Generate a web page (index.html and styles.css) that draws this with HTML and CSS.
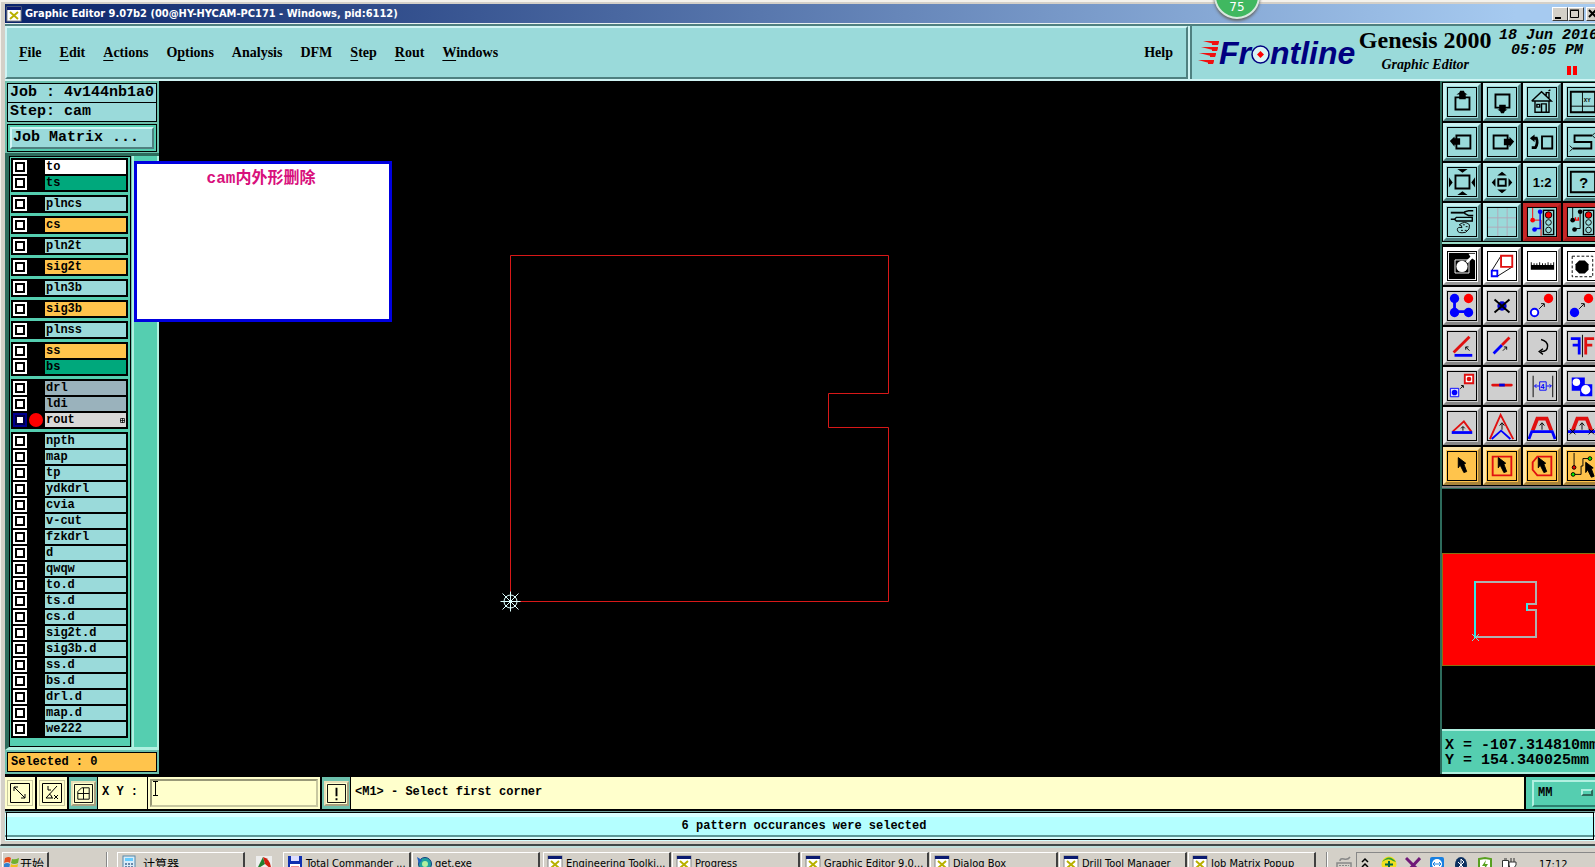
FILE: index.html
```html
<!DOCTYPE html>
<html lang="en">
<head>
    <meta charset="UTF-8">
    <meta name="viewport" content="width=device-width, initial-scale=1.0">
    <title>Graphic Editor 9.07b2</title>
    <link rel="stylesheet" href="styles.css">
</head>
<body>
    <svg class="defs" width="0" height="0" aria-hidden="true">
        <defs>
            <symbol id="xicon" viewBox="0 0 16 16">
                <rect x="1" y="1" width="14" height="14" fill="#fff" stroke="#888"/>
                <rect x="1" y="1" width="14" height="3" fill="#0a1a70"/>
                <path d="M4 6l8 7M12 6l-8 7" stroke="#b8b000" stroke-width="2"/>
            </symbol>
            <symbol id="cursor" viewBox="0 0 30 30">
                <path d="M11 6l8 6-2 1 3 8-3 1-4-8-2 3z" fill="#000" stroke="#000" stroke-linejoin="round"/>
            </symbol>
            <symbol id="uparrow" viewBox="0 0 30 30">
                <path d="M15 19v-7M12.500 14.500l2.500-3 2.500 3" fill="none" stroke="#000"/>
            </symbol>
            <symbol id="nearrow" viewBox="0 0 30 30">
                <path d="M12 18l5-5M14 12.500h3.500v3.500" fill="none" stroke="#000"/>
            </symbol>
            <symbol id="light" viewBox="0 0 30 30">
                <rect x="16.500" y="2.500" width="11" height="26" fill="#9adada" stroke="#000" stroke-width="1.500"/>
                <circle cx="22" cy="7.500" r="3.500" fill="#f00" stroke="#000"/>
                <circle cx="22" cy="15.500" r="3" fill="none" stroke="#000"/>
                <circle cx="22" cy="23.500" r="3" fill="none" stroke="#000"/>
            </symbol>
        </defs>
    </svg>

    <div class="window">
        <div class="titlebar">
            <svg class="title-icon"><use href="#xicon"/></svg>
            <span class="title-text">Graphic Editor 9.07b2 (00@HY-HYCAM-PC171 - Windows, pid:6112)</span>
            <div class="title-buttons">
                <button type="button" aria-label="Minimize"><svg viewBox="0 0 12 12"><path d="M2 10h6" stroke="#000" stroke-width="2"/></svg></button>
                <button type="button" aria-label="Maximize"><svg viewBox="0 0 12 12"><path d="M1.500 2.500h8v7h-8zM1 2h9" fill="none" stroke="#000"/></svg></button>
                <button type="button" class="close" aria-label="Close"><svg viewBox="0 0 12 12"><path d="M2 2l7 7M9 2l-7 7" stroke="#000" stroke-width="2"/></svg></button>
            </div>
        </div>

        <header class="header">
            <nav class="menu">
                <a href="#"><u>F</u>ile</a>
                <a href="#"><u>E</u>dit</a>
                <a href="#"><u>A</u>ctions</a>
                <a href="#">O<u>p</u>tions</a>
                <a href="#">Analysis</a>
                <a href="#">DFM</a>
                <a href="#"><u>S</u>tep</a>
                <a href="#"><u>R</u>out</a>
                <a href="#"><u>W</u>indows</a>
                <a href="#" class="help">Help</a>
            </nav>
            <div class="brand">
                <div class="logo">
                    <svg class="speed" viewBox="0 0 21 24"><path d="M5 0h16l-1 4zM3 6h17l-1 4zM1 12h17l-1 4zM0 19h16l-1 4z" fill="#f01010"/><path d="M14 0h7l-1 4h-6zM14 6h6l-1 4h-5zM12 12h6l-1 4h-5zM10 19h6l-1 4h-5z" fill="#f01010"/></svg>
                    <span>Fr</span><svg class="logo-o" viewBox="0 0 19 19"><circle cx="9.500" cy="9.500" r="8.500" fill="#d8f4f4" stroke="#000080" stroke-width="1.500"/><path d="M9.500 6l3.500 3.500-3.500 3.500L6 9.500z" fill="#f00"/></svg><span>ntline</span>
                </div>
                <div class="product">
                    <div class="product-name">Genesis 2000</div>
                    <div class="product-sub">Graphic Editor</div>
                </div>
                <div class="clock">
                    <div>18 Jun 2016</div>
                    <div class="time">05:05 PM</div>
                    <div class="pause"><i></i><i></i></div>
                </div>
            </div>
        </header>

        <main class="main">
            <aside class="left">
                <div class="jobinfo">
                    <div class="field">Job : 4v144nb1a0</div>
                    <div class="field">Step: cam</div>
                </div>
                <div class="matrix"><button type="button">Job Matrix ...</button></div>
                <div class="layers-area">
                    <div class="layers">
                        <div class="group">
                            <div class="layer white"><input type="checkbox" id="l-to"><label for="l-to">to</label></div>
                            <div class="layer green"><input type="checkbox" id="l-ts"><label for="l-ts">ts</label></div>
                        </div>
                        <div class="group"><div class="layer"><input type="checkbox" id="l-plncs"><label for="l-plncs">plncs</label></div></div>
                        <div class="group"><div class="layer orange"><input type="checkbox" id="l-cs"><label for="l-cs">cs</label></div></div>
                        <div class="group"><div class="layer"><input type="checkbox" id="l-pln2t"><label for="l-pln2t">pln2t</label></div></div>
                        <div class="group"><div class="layer orange"><input type="checkbox" id="l-sig2t"><label for="l-sig2t">sig2t</label></div></div>
                        <div class="group"><div class="layer"><input type="checkbox" id="l-pln3b"><label for="l-pln3b">pln3b</label></div></div>
                        <div class="group"><div class="layer orange"><input type="checkbox" id="l-sig3b"><label for="l-sig3b">sig3b</label></div></div>
                        <div class="group"><div class="layer"><input type="checkbox" id="l-plnss"><label for="l-plnss">plnss</label></div></div>
                        <div class="group">
                            <div class="layer orange"><input type="checkbox" id="l-ss"><label for="l-ss">ss</label></div>
                            <div class="layer green"><input type="checkbox" id="l-bs"><label for="l-bs">bs</label></div>
                        </div>
                        <div class="group">
                            <div class="layer gray"><input type="checkbox" id="l-drl"><label for="l-drl">drl</label></div>
                            <div class="layer gray"><input type="checkbox" id="l-ldi"><label for="l-ldi">ldi</label></div>
                            <div class="layer active"><input type="checkbox" id="l-rout" checked><i class="dot"></i><label for="l-rout">rout<svg class="plus" viewBox="0 0 5 5"><path d="M0.500 0.500h4v4h-4zM2.500 0v5M0 2.500h5" fill="none" stroke="#000" stroke-width="0.700"/></svg></label></div>
                        </div>
                        <div class="group">
                            <div class="layer"><input type="checkbox" id="l-npth"><label for="l-npth">npth</label></div>
                            <div class="layer"><input type="checkbox" id="l-map"><label for="l-map">map</label></div>
                            <div class="layer"><input type="checkbox" id="l-tp"><label for="l-tp">tp</label></div>
                            <div class="layer"><input type="checkbox" id="l-ydkdrl"><label for="l-ydkdrl">ydkdrl</label></div>
                            <div class="layer"><input type="checkbox" id="l-cvia"><label for="l-cvia">cvia</label></div>
                            <div class="layer"><input type="checkbox" id="l-vcut"><label for="l-vcut">v-cut</label></div>
                            <div class="layer"><input type="checkbox" id="l-fzkdrl"><label for="l-fzkdrl">fzkdrl</label></div>
                            <div class="layer"><input type="checkbox" id="l-d"><label for="l-d">d</label></div>
                            <div class="layer"><input type="checkbox" id="l-qwqw"><label for="l-qwqw">qwqw</label></div>
                            <div class="layer"><input type="checkbox" id="l-tod"><label for="l-tod">to.d</label></div>
                            <div class="layer"><input type="checkbox" id="l-tsd"><label for="l-tsd">ts.d</label></div>
                            <div class="layer"><input type="checkbox" id="l-csd"><label for="l-csd">cs.d</label></div>
                            <div class="layer"><input type="checkbox" id="l-sig2td"><label for="l-sig2td">sig2t.d</label></div>
                            <div class="layer"><input type="checkbox" id="l-sig3bd"><label for="l-sig3bd">sig3b.d</label></div>
                            <div class="layer"><input type="checkbox" id="l-ssd"><label for="l-ssd">ss.d</label></div>
                            <div class="layer"><input type="checkbox" id="l-bsd"><label for="l-bsd">bs.d</label></div>
                            <div class="layer"><input type="checkbox" id="l-drld"><label for="l-drld">drl.d</label></div>
                            <div class="layer"><input type="checkbox" id="l-mapd"><label for="l-mapd">map.d</label></div>
                            <div class="layer"><input type="checkbox" id="l-we222"><label for="l-we222">we222</label></div>
                        </div>
                    </div>
                    <div class="layer-scroll"></div>
                </div>
                <div class="selected">Selected : 0</div>
            </aside>

            <section class="canvas">
                <svg class="drawing" width="100%" height="100%">
                    <path d="M351.500 174.500h378v138h-60v34h60v174h-378z" fill="none" stroke="#d81818"/>
                    <g stroke="#dff" fill="none">
                        <circle cx="351.500" cy="520.500" r="6.500"/>
                        <path d="M341.500 520.500h20M351.500 510.500v20M343.500 512.500l16 16M359.500 512.500l-16 16"/>
                    </g>
                </svg>
            </section>

            <aside class="right">
                <div class="tools view-tools">
                    <button type="button" aria-label="Pan up"><svg viewBox="0 0 30 30"><path d="M8 10h15v13H8z" fill="none" stroke="#000" stroke-width="2"/><path d="M9 7l3-2 1-2h4l1 2 3 2h-2v5h-7V7z"/></svg></button>
                    <button type="button" aria-label="Pan down"><svg viewBox="0 0 30 30"><path d="M8 7h15v14H8z" fill="none" stroke="#000" stroke-width="2"/><path d="M12 18h7v5h2l-3 2-1 2h-3l-1-2-3-2h2z"/></svg></button>
                    <button type="button" aria-label="Home"><svg viewBox="0 0 30 30"><path d="M4 14L14.500 4 25 14H4M7.500 14v12h15V14M14.500 26v-9h5v9M9.500 17.500h3v3h-3zM19.500 8V5h3v6M22 3l2-1" fill="none" stroke="#000" stroke-width="1.500"/></svg></button>
                    <button type="button" aria-label="Zoom XY"><svg viewBox="0 0 30 30"><path d="M3 4h26v22H3z" fill="none" stroke="#000" stroke-width="2"/><path d="M15.500 4v22M3 19.500h26" stroke="#000"/><text x="17" y="15" font-size="6">XY</text></svg></button>

                    <button type="button" aria-label="Pan left"><svg viewBox="0 0 30 30"><path d="M9 8h15v14H9z" fill="none" stroke="#000" stroke-width="2"/><path d="M2 14l5-5v2h6v7H7v2z"/></svg></button>
                    <button type="button" aria-label="Pan right"><svg viewBox="0 0 30 30"><path d="M6 8h15v14H6z" fill="none" stroke="#000" stroke-width="2"/><path d="M28 14.500l-5-5v2h-6v7h6v2z"/></svg></button>
                    <button type="button" aria-label="Previous view"><svg viewBox="0 0 30 30"><path d="M15 9h11v13H15z" fill="none" stroke="#000" stroke-width="2"/><path d="M4 11h5q2 5-1 10H4" fill="none" stroke="#000" stroke-width="3"/><path d="M2 11l5-4v8z"/></svg></button>
                    <button type="button" aria-label="Serpentine view"><svg viewBox="0 0 30 30"><path d="M26 8H7v7h18v7H5" fill="none" stroke="#000" stroke-width="2"/><path d="M29 5l-3 3 3 3M2 19l3 3-3 3" fill="none" stroke="#000"/></svg></button>

                    <button type="button" aria-label="Zoom in"><svg viewBox="0 0 30 30"><path d="M8 8h15v14H8z" fill="none" stroke="#000" stroke-width="2"/><path d="M10 1h11l-5.500 4zM10 29h11l-5.500-4zM1 10v11l4-5.500zM29 10v11l-4-5.500z"/></svg></button>
                    <button type="button" aria-label="Zoom out"><svg viewBox="0 0 30 30"><path d="M11 12h8v7h-8z" fill="none" stroke="#000" stroke-width="2"/><path d="M10 8h10l-5-4zM10 23h10l-5 4zM8 11v9l-4-4.500zM22 11v9l4-4.500z"/></svg></button>
                    <button type="button" aria-label="Zoom 1:2"><svg viewBox="0 0 30 30"><text x="5" y="20" font-size="14" class="tall">1:2</text></svg></button>
                    <button type="button" aria-label="Query"><svg viewBox="0 0 30 30"><path d="M3 4h26v22H3z" fill="none" stroke="#000" stroke-width="2"/><text x="12" y="21" font-size="16">?</text></svg></button>

                    <button type="button" aria-label="Settings"><svg viewBox="0 0 30 30"><path d="M3 4h15v2H3z"/><path d="M27 3h-5l-4 1v2l4 2h5M3 12h4l2-2h17v4H9l-2-2" fill="none" stroke="#000" stroke-width="1.500"/><path d="M12 18q6-5 11 0 1 5-4 8-9 2-9-3 0-3 5-2 0-3-3-3z" fill="none" stroke="#000"/><path d="M16 18h2M19 20h2M14 24h2M18 24h2" stroke="#000"/></svg></button>
                    <button type="button" aria-label="Grid"><svg viewBox="0 0 30 30"><path d="M10.500 0v30M20.500 0v30M0 10.500h30M0 20.500h30" stroke="#b0a8b8"/></svg></button>
                    <button type="button" class="redframe" aria-label="Net on"><svg viewBox="0 0 30 30"><path d="M5 0v13h9v17" fill="none" stroke="#f00"/><path d="M13 4v18H7" fill="none" stroke="#00f" stroke-width="1.500"/><circle cx="5" cy="13" r="2.500" fill="#f00"/><circle cx="13" cy="4" r="2.500" fill="#00f"/><circle cx="7" cy="23" r="2.500" fill="#00f"/><use href="#light"/></svg></button>
                    <button type="button" class="redframe" aria-label="Net off"><svg viewBox="0 0 30 30"><path d="M5 0v13M13 4v18H7" fill="none" stroke="#000"/><path d="M5 13h7M8 13v-3M11 13v-3" stroke="#f00" stroke-width="1.500"/><circle cx="5" cy="13" r="2.500"/><circle cx="13" cy="4" r="2.500"/><circle cx="7" cy="23" r="2.500"/><use href="#light"/></svg></button>
                </div>

                <div class="tools edit-tools">
                    <button type="button" class="lit" aria-label="Negative"><svg viewBox="0 0 30 30"><path d="M1 1h28v28H1z"/><path d="M7.500 8.500h15v14h-15z" fill="none" stroke="#fff"/><circle cx="15" cy="15.500" r="6" fill="#fff"/><path d="M19 10l5-5-2-3h7v7l-3-2-5 5z" fill="#fff"/></svg></button>
                    <button type="button" class="lit" aria-label="Scale"><svg viewBox="0 0 30 30"><path d="M4 20L14 4M10 26l16-10" stroke="#000"/><path d="M14 4h12v12H14z" fill="#fff" stroke="#e01010" stroke-width="2"/><path d="M4 20h6v6H4z" fill="#fff" stroke="#00f" stroke-width="2"/></svg></button>
                    <button type="button" class="lit" aria-label="Measure"><svg viewBox="0 0 30 30"><path d="M3 14h25v5H3zM3 11h1v4H3zM6 12h1v3H6zM9 12h1v3H9zM12 11h1v4h-1zM15 12h1v3h-1zM18 12h1v3h-1zM21 11h1v4h-1zM24 12h1v3h-1zM27 11h1v4h-1z"/></svg></button>
                    <button type="button" class="lit" aria-label="Highlight"><svg viewBox="0 0 30 30"><path d="M4.500 4.500h22v22h-22z" fill="none" stroke="#000" stroke-dasharray="3 2"/><path d="M12 9h6l4 4v6l-4 4h-6l-4-4v-6z"/></svg></button>

                    <button type="button" aria-label="Add nodes"><svg viewBox="0 0 30 30"><path d="M7 7v14h15" fill="none" stroke="#00f" stroke-width="3"/><circle cx="7" cy="7" r="5" fill="#00f"/><circle cx="7" cy="22" r="5" fill="#00f"/><circle cx="22" cy="22" r="5" fill="#00f"/><circle cx="22" cy="7" r="5" fill="#f00"/></svg></button>
                    <button type="button" aria-label="Delete"><svg viewBox="0 0 30 30"><circle cx="15" cy="15" r="5" fill="#0000d0"/><path d="M7 8l16 14M23 8L7 22" stroke="#000" stroke-width="2"/></svg></button>
                    <button type="button" aria-label="Move"><svg viewBox="0 0 30 30"><circle cx="7" cy="22" r="4" fill="#fff" stroke="#00f" stroke-width="2"/><circle cx="22" cy="7" r="5" fill="#f00"/><use href="#nearrow"/></svg></button>
                    <button type="button" aria-label="Copy"><svg viewBox="0 0 30 30"><circle cx="7" cy="22" r="5" fill="#00f"/><circle cx="22" cy="7" r="5" fill="#f00"/><use href="#nearrow"/></svg></button>

                    <button type="button" aria-label="Angle"><svg viewBox="0 0 30 30"><path d="M6 22L23 5" stroke="#e01010" stroke-width="3"/><path d="M7 25h19" stroke="#00f" stroke-width="3"/><path d="M23 20l-4-4M19 19v-3h3" fill="none" stroke="#000"/></svg></button>
                    <button type="button" aria-label="Extend"><svg viewBox="0 0 30 30"><path d="M6 23l9-9" stroke="#00f" stroke-width="3"/><path d="M15 14l8-8" stroke="#e01010" stroke-width="3"/><path d="M16 20l4-4M17 16h3v3" fill="none" stroke="#000"/></svg></button>
                    <button type="button" aria-label="Rotate"><svg viewBox="0 0 30 30"><path d="M14 8q7 2 7 7 0 6-7 6M16 18l-4 3 4 3" fill="none" stroke="#000" stroke-width="1.500"/></svg></button>
                    <button type="button" aria-label="Mirror"><svg viewBox="0 0 30 30"><path d="M3 7h9v17M5 14h7" fill="none" stroke="#00f" stroke-width="3"/><path d="M15.500 3v24" stroke="#000"/><path d="M28 7h-9v17M19 14h7" fill="none" stroke="#e01010" stroke-width="3"/></svg></button>

                    <button type="button" aria-label="Copy to layer"><svg viewBox="0 0 30 30"><path d="M18 3h9v9h-9z" fill="#fff" stroke="#e01010" stroke-width="2"/><circle cx="22.500" cy="7.500" r="2.500" fill="#e01010"/><path d="M2.500 17.500h9v9h-9z" fill="#ddf" stroke="#00f"/><circle cx="7" cy="22" r="3" fill="#00f"/><path d="M13 18l3-3M14 14.500h2.500v2.500" fill="none" stroke="#000"/></svg></button>
                    <button type="button" aria-label="Join"><svg viewBox="0 0 30 30"><path d="M5 14h20" stroke="#e01010" stroke-width="3" stroke-linecap="round"/><path d="M12 14h6" stroke="#00d" stroke-width="3"/></svg></button>
                    <button type="button" aria-label="Spacing"><svg viewBox="0 0 30 30"><path d="M5.500 4v23M26.500 4v23" stroke="#000"/><path d="M12.500 10.500h7v9h-7zM12 15H7m2-2l-2 2 2 2M20 15h5m-2-2l2 2-2 2" fill="none" stroke="#00f"/><text x="13" y="18" font-size="8" fill="#00f">4</text></svg></button>
                    <button type="button" aria-label="Merge"><svg viewBox="0 0 30 30"><path d="M4 6h14v7h8v13H13v-6H4z" fill="#00f"/><circle cx="9" cy="11" r="4" fill="#fff"/><circle cx="19" cy="19" r="5" fill="#fff"/></svg></button>

                    <button type="button" aria-label="Chamfer"><svg viewBox="0 0 30 30"><path d="M5 21L17 10l8 11" fill="none" stroke="#e01010" stroke-width="2"/><path d="M4 22h22" stroke="#00f" stroke-width="3"/><path d="M16 20v-4M14 17.500l2-2 2 2" fill="none" stroke="#000"/></svg></button>
                    <button type="button" aria-label="Stretch peak"><svg viewBox="0 0 30 30"><path d="M2 29L13.500 3 27 29" fill="none" stroke="#e01010" stroke-width="2"/><path d="M4 29l10-9 10 9" fill="none" stroke="#00f" stroke-width="2"/><use href="#uparrow"/></svg></button>
                    <button type="button" aria-label="Stretch plateau"><svg viewBox="0 0 30 30"><path d="M5 20L10 7h10l5 13" fill="none" stroke="#e01010" stroke-width="4"/><path d="M1 29l3-8h22l3 8" fill="none" stroke="#00f" stroke-width="3"/><use href="#uparrow"/></svg></button>
                    <button type="button" aria-label="Stretch flat"><svg viewBox="0 0 30 30"><path d="M5 20L10 7h10l5 13" fill="none" stroke="#e01010" stroke-width="4"/><path d="M0 21h30" stroke="#00f" stroke-width="3"/><path d="M2 18l6 6M8 18l-6 6M22 18l6 6M28 18l-6 6" stroke="#000"/><use href="#uparrow"/></svg></button>

                    <button type="button" class="gold" aria-label="Select"><svg viewBox="0 0 30 30"><use href="#cursor"/></svg></button>
                    <button type="button" class="gold" aria-label="Select rectangle"><svg viewBox="0 0 30 30"><path d="M5 5h20v20H5z" fill="none" stroke="#e01010" stroke-width="2"/><use href="#cursor"/></svg></button>
                    <button type="button" class="gold" aria-label="Select polygon"><svg viewBox="0 0 30 30"><path d="M10 5h15v20H10l-5-6v-8z" fill="none" stroke="#e01010" stroke-width="2"/><use href="#cursor"/></svg></button>
                    <button type="button" class="gold" aria-label="Select net"><svg viewBox="0 0 30 30"><path d="M6.500 1v15M6 24h8v-9h2V7h7" fill="none" stroke="#000"/><circle cx="6.500" cy="16.500" r="2" fill="#e00" stroke="#000"/><circle cx="5.500" cy="24" r="2" fill="#0e0" stroke="#000"/><circle cx="23.500" cy="7" r="2" fill="#0e0" stroke="#000"/><use href="#cursor" x="8" y="5"/></svg></button>
                </div>

                <div class="overview">
                    <div class="overview-map">
                        <svg width="100%" height="100%">
                            <path d="M33 28h60v22h-9v6h9v27H33" fill="none" stroke="#b0b0b0" stroke-width="2"/>
                            <path d="M32 27v57M84 49v8" stroke="#30e8e8" stroke-width="2"/>
                            <path d="M29 80l7 7M36 80l-7 7" stroke="#7dd"/>
                        </svg>
                    </div>
                </div>
                <div class="coords">
                    <div>X = -107.314810mm</div>
                    <div>Y = 154.340025mm</div>
                </div>
            </aside>

            <div class="popup">cam内外形删除</div>
        </main>

        <div class="command">
            <button type="button" class="cmd" aria-label="Snap off"><svg viewBox="0 0 20 20"><path d="M0.500 0.500h19v19H0.500zM4 4l11 11M4 8V4h4M15 11v4h-4" fill="none" stroke="#000"/></svg></button>
            <button type="button" class="cmd" aria-label="Angle mode"><svg viewBox="0 0 20 20"><path d="M0.500 0.500h19v19H0.500zM15 3L4 15h7M6 3v4h3M7 11q3 1 3 4M12 12l4 4M16 12l-4 4" fill="none" stroke="#000"/></svg></button>
            <button type="button" class="cmd pressed" aria-label="Grid snap"><svg viewBox="0 0 20 20"><path d="M0.500 0.500h19v19H0.500zM4 8l4-4h8v12H4zM10 4v12M4 10h12" fill="none" stroke="#000"/></svg></button>
            <label for="xy">X Y :</label>
            <div class="xy-wrap"><input type="text" id="xy"><svg class="ibeam" viewBox="0 0 5 15"><path d="M0 0.500h5M0 14.500h5M2.500 0v15" stroke="#000"/></svg></div>
            <button type="button" class="cmd pressed" aria-label="Alert"><svg viewBox="0 0 20 20"><path d="M0.500 0.500h19v19H0.500z" fill="none" stroke="#000"/><path d="M9 4h2v9H9zM9 15h2v2H9z"/></svg></button>
            <div class="prompt">&lt;M1&gt; - Select first corner</div>
            <div class="units">
                <select aria-label="Units"><option>MM</option></select>
                <i class="option-mark"></i>
            </div>
        </div>
        <div class="message">6 pattern occurances were selected</div>
    </div>

    <footer class="taskbar">
        <button type="button" class="task start"><svg viewBox="0 0 16 16"><path d="M1 3q4-2 6 0L6 8Q4 6 0 8z" fill="#e85020"/><path d="M8 4q3 1 7-1l-1 5q-4 2-7 0z" fill="#70b030"/><path d="M0 9q3-2 6 0l-1 5q-3-2-6 0z" fill="#3080d0"/><path d="M7 9q3 2 7 0l-1 5q-4 2-7 0z" fill="#f0c020"/></svg>开始</button>
        <i class="sep"></i>
        <button type="button" class="task calc"><svg viewBox="0 0 16 16"><rect x="2" y="1" width="12" height="15" fill="#d8ecf8" stroke="#58a"/><rect x="4" y="3" width="8" height="3" fill="#6cf"/><path d="M4 9h8M4 12h8" stroke="#68a" stroke-dasharray="2 1" stroke-width="2"/></svg>计算器</button>
        <svg class="quick" viewBox="0 0 16 16"><path d="M0 1h16v15H0z" fill="#eee"/><path d="M1 14L7 2l2 7z" fill="#208030"/><path d="M7 2q8 2 8 12l-6-5z" fill="#d02010"/></svg>
        <button type="button" class="task"><svg viewBox="0 0 16 16"><path d="M1 1h14v15H1z" fill="#1030b0"/><path d="M4 1h8v5H4z" fill="#ddf"/><path d="M3 9h10v7H3z" fill="#fff"/><path d="M4 12h8" stroke="#e02020"/></svg>Total Commander ...</button>
        <button type="button" class="task"><svg viewBox="0 0 16 16"><circle cx="9" cy="9" r="6.500" fill="#20a0a0" stroke="#104080"/><circle cx="9" cy="9" r="3" fill="#b0f0a0"/><path d="M1 2l5 3-3 4z" fill="#2060c0"/></svg>get.exe</button>
        <div class="editor-tasks">
            <button type="button" class="task"><svg><use href="#xicon"/></svg>Engineering Toolki...</button>
            <button type="button" class="task"><svg><use href="#xicon"/></svg>Progress</button>
            <button type="button" class="task"><svg><use href="#xicon"/></svg>Graphic Editor 9.0...</button>
            <button type="button" class="task"><svg><use href="#xicon"/></svg>Dialog Box</button>
            <button type="button" class="task"><svg><use href="#xicon"/></svg>Drill Tool Manager</button>
            <button type="button" class="task"><svg><use href="#xicon"/></svg>Job Matrix Popup</button>
        </div>
        <div class="tray-area">
            <i class="sep"></i>
            <svg class="keyboard" viewBox="0 0 16 16"><path d="M1 8h14v8H1zM4 6q0-3 4-2t6-2" fill="none" stroke="#888" stroke-width="1.500"/><path d="M3 10.500h10M3 13h10" stroke="#888" stroke-dasharray="2 1"/></svg>
            <div class="tray">
                <svg viewBox="0 0 16 16"><path d="M5 6l3-3 3 3M5 11l3-3 3 3" fill="none" stroke="#000" stroke-width="1.500"/></svg>
                <svg viewBox="0 0 16 16"><circle cx="8" cy="8" r="7.500" fill="#f0e020"/><path d="M1 6q7-9 14 0l-3-1q-5-4-11 1z" fill="#30a030"/><path d="M8 5v7M4 8.500h8" stroke="#064" stroke-width="2"/></svg>
                <svg viewBox="0 0 16 16"><path d="M1 2l12 12M15 2L3 15" stroke="#701878" stroke-width="3"/></svg>
                <svg viewBox="0 0 16 16"><rect x="1" y="1" width="14" height="15" rx="2" fill="#1880e0"/><circle cx="8" cy="8" r="5" fill="#fff"/><path d="M4 8h8M6 6L4 8l2 2M10 6l2 2-2 2" fill="none" stroke="#1880e0"/></svg>
                <svg viewBox="0 0 16 16"><ellipse cx="8" cy="9" rx="6" ry="8" fill="#0c3060"/><path d="M5 6l6 6-3 3V3l3 3-6 6" fill="none" stroke="#fff"/></svg>
                <svg viewBox="0 0 16 16"><path d="M2 3l6-1 6 1v9l-6 4-6-4z" fill="#fff" stroke="#58a020" stroke-width="2"/><path d="M9 4l-4 6h3l-1 4 4-6H8z" fill="#58a020"/></svg>
                <svg viewBox="0 0 16 16"><path d="M1.500 4.500h6v11h-6zM3 3h3M8 6h7v3q-1 3-4 3t-3-3zM10 2v4M13 2v4M11 12v4" fill="#fff" stroke="#333"/></svg>
                <span class="tray-time">17:12</span>
            </div>
        </div>
    </footer>

    <div class="badge">75</div>
</body>
</html>
```
FILE: styles.css
```css
* {
    box-sizing: border-box;
}
body {
    margin: 0;
    height: 100vh;
    display: flex;
    flex-direction: column;
    overflow: hidden;
    background: #d4d0c8;
    font-family: "Liberation Mono", "Noto Sans CJK SC", monospace;
    font-weight: bold;
    font-size: 12px;
    color: #000;
}
button, input, select {
    font: inherit;
    color: inherit;
    margin: 0;
    padding: 0;
    border-radius: 0;
}
.defs {
    position: absolute;
}
.window {
    flex: 1;
    min-height: 0;
    display: flex;
    flex-direction: column;
    padding: 2px 0 3px 4px;
    border-top: 2px solid #f4f2ec;
    border-bottom: 2px solid #404848;
    border-left: 1px solid #f4f2ec;
}

/* title bar */
.titlebar {
    flex: none;
    height: 20px;
    display: flex;
    align-items: center;
    padding-left: 1px;
    background: linear-gradient(to right, #0a246a, #a6caf0 95%);
    border-bottom: 1px solid #e8f0f0;
    color: #fff;
    font-family: "DejaVu Sans Condensed", "DejaVu Sans", sans-serif;
    font-size: 11px;
}
.title-icon {
    width: 16px;
    height: 16px;
    margin-right: 3px;
}
.title-text {
    flex: 1;
    white-space: nowrap;
}
.title-buttons {
    display: flex;
    width: 43px;
    overflow: hidden;
}
.title-buttons button {
    flex: none;
    width: 16px;
    height: 14px;
    background: #d4d0c8;
    border: 1px solid #fff;
    border-right-color: #404040;
    border-bottom-color: #404040;
}
.title-buttons .close {
    margin-left: 2px;
}
.title-buttons svg {
    display: block;
    width: 12px;
    height: 12px;
}

/* menu and brand */
.header {
    flex: none;
    height: 57px;
    display: flex;
    background: #9adada;
    border-top: 2px solid #4f8080;
    border-bottom: 2px solid #d0f4f4;
}
.menu {
    flex: 1;
    display: flex;
    align-items: center;
    gap: 18px;
    padding: 0 13px 0 12px;
    border: 2px solid #d0f4f4;
    border-right-color: #4f8080;
    border-bottom-color: #4f8080;
    font-family: "Liberation Serif", serif;
    font-size: 14px;
}
.menu a {
    color: #000;
    text-decoration: none;
}
.menu u {
    text-underline-offset: 3px;
}
.menu .help {
    margin-left: auto;
}
.brand {
    flex: none;
    width: 407px;
    display: flex;
    overflow: hidden;
    border-left: 2px solid #d0f4f4;
    box-shadow: inset 2px 0 #4f8080;
    padding-left: 8px;
}
.logo {
    display: flex;
    align-items: center;
    width: 162px;
    color: #000080;
    font: italic bold 32px/48px "Liberation Sans", sans-serif;
}
.speed {
    width: 21px;
    height: 24px;
}
.logo-o {
    width: 19px;
    height: 19px;
    margin-top: 4px;
}
.product {
    width: 138px;
    text-align: center;
    font-family: "Liberation Serif", serif;
    white-space: nowrap;
}
.product-name {
    font-size: 24px;
    line-height: 28px;
}
.product-sub {
    font-size: 14px;
    line-height: 22px;
    font-style: italic;
}
.clock {
    flex: none;
    width: 102px;
    padding: 2px 0 0 6px;
    font-size: 15px;
    line-height: 15px;
    font-style: italic;
    white-space: nowrap;
}
.clock .time {
    padding-left: 12px;
}
.pause {
    display: flex;
    gap: 2px;
    padding: 8px 0 0 68px;
}
.pause i {
    width: 4px;
    height: 9px;
    background: #f00;
}

/* main area */
.main {
    flex: 1;
    min-height: 0;
    display: flex;
    position: relative;
    background: #000;
}
.left {
    flex: none;
    width: 154px;
    display: flex;
    flex-direction: column;
    margin-bottom: 2px;
    background: #6cc0ac;
}
.jobinfo {
    margin: 2px 2px 0;
    font-size: 15px;
    white-space: nowrap;
}
.field {
    height: 20px;
    line-height: 18px;
    padding-left: 2px;
    background: #9adada;
    border: 1px solid #000;
}
.field + .field {
    height: 19px;
    border-top: 0;
}
.matrix {
    margin: 2px 2px 0;
    padding: 2px;
    border: 1px solid #000;
    background: #55ceb0;
}
.matrix button {
    display: block;
    width: 100%;
    height: 22px;
    padding-left: 1px;
    text-align: left;
    font-size: 15px;
    line-height: 16px;
    background: #9adada;
    border: 2px solid #d0f4f4;
    border-right-color: #4f8080;
    border-bottom-color: #4f8080;
}
.layers-area {
    flex: 1;
    min-height: 0;
    display: flex;
    margin-top: 1px;
    border-top: 3px solid #2d6b5c;
    border-left: 4px solid #2d6b5c;
    border-bottom: 3px solid #b0f0e0;
}
.layers {
    width: 122px;
    display: flex;
    flex-direction: column;
    gap: 3px;
    padding: 1px;
    border: 1px solid #000;
    background: #55ceb0;
}
.layer-scroll {
    flex: 1;
    margin-left: 1px;
    background: #55ceb0;
    border-left: 2px solid #b0f0e0;
    border-right: 2px solid #b0f0e0;
}
.group {
    display: flex;
    flex-direction: column;
    gap: 2px;
    padding: 2px;
    width: 117px;
    background: #000;
}
.layer {
    display: flex;
    height: 14px;
}
.layer input {
    appearance: none;
    flex: none;
    width: 14px;
    height: 14px;
    background: #fff;
    border: 2px solid #fff;
    box-shadow: inset 0 0 0 2px #000;
}
.layer label {
    flex: 1;
    display: flex;
    align-items: center;
    justify-content: space-between;
    margin-left: 18px;
    padding-left: 1px;
    line-height: 13px;
    background: #9adada;
}
.white label { background: #fff; }
.green label { background: #00a87c; }
.orange label { background: #ffc44c; }
.gray label { background: #9ab2bc; }
.active label {
    margin-left: 1px;
    background: #d8d8d8;
}
.active input {
    border-color: #000090;
    box-shadow: inset 0 0 0 2px #000040;
}
.dot {
    width: 14px;
    height: 14px;
    margin: 0 1px 0 2px;
    border-radius: 50%;
    background: #f00;
}
.plus {
    width: 5px;
    height: 5px;
    margin-right: 1px;
}
.selected {
    flex: none;
    height: 20px;
    margin: 2px;
    padding-left: 3px;
    line-height: 18px;
    background: #ffc44c;
    border: 1px solid #000;
}
.canvas {
    flex: 1;
    background: #000;
}
.drawing {
    display: block;
}
.popup {
    position: absolute;
    left: 129px;
    top: 80px;
    width: 258px;
    height: 161px;
    padding-right: 4px;
    border: 3px solid #0000e0;
    background: #fff;
    color: #d8107c;
    font-size: 16px;
    text-align: center;
}

/* tool buttons */
.right {
    flex: none;
    width: 155px;
    display: flex;
    flex-direction: column;
    overflow: hidden;
    margin-bottom: 2px;
    border-left: 2px solid #2d6b5c;
}
.tools {
    flex: none;
    display: grid;
    grid-template-columns: repeat(4, 38px);
    gap: 2px;
    padding: 1px 0 1px 1px;
}
.view-tools {
    border-top: 1px solid #2d6b5c;
    border-bottom: 2px solid #9adcc8;
}
.edit-tools {
    padding-top: 3px;
    border-bottom: 2px solid #808080;
}
.tools button {
    width: 38px;
    height: 38px;
    padding: 1px;
    background: #cfcfcf;
    border: 3px solid #eee;
    border-right-color: #888;
    border-bottom-color: #888;
}
.tools svg {
    display: block;
    width: 30px;
    height: 30px;
    border: 1px solid #000;
}
.tools text {
    font-family: "Liberation Mono", monospace;
    font-weight: bold;
}
.tools text.tall {
    font-family: "Liberation Sans", sans-serif;
}
.tools .lit {
    background: #fff;
    border-color: #fff #999 #999 #fff;
}
.tools .gold {
    background: #ffc44c;
    border-color: #ffe6a8 #a8843c #a8843c #ffe6a8;
}
.view-tools button {
    background: #9adada;
    border-color: #c8f0f0 #4f8080 #4f8080 #c8f0f0;
}
.view-tools .redframe {
    background: #c02020;
    border-color: #c82828 #a81c1c #a81c1c #c82828;
}
.redframe svg {
    background: #9adada;
}
.overview {
    flex: 1;
    display: flex;
    align-items: center;
    background: #000;
    border-top: 1px solid #2d6b5c;
}
.overview-map {
    width: 100%;
    height: 113px;
    background: #f00;
    border: 1px solid #8a7010;
    border-right: 0;
}
.overview-map svg {
    display: block;
}
.coords {
    flex: none;
    height: 45px;
    padding: 7px 0 0 3px;
    font-size: 15px;
    line-height: 15px;
    white-space: nowrap;
    background: #55ceb0;
    border-top: 2px solid #b0f0e0;
    border-bottom: 2px solid #b0f0e0;
}

/* command line */
.command {
    flex: none;
    height: 35px;
    display: flex;
    background: #ffffcc;
    border-top: 1px solid #000;
    border-bottom: 2px solid #000;
}
.cmd {
    flex: none;
    display: grid;
    place-items: center;
    width: 32px;
    background: #ffffcc;
    border: 0;
    border-right: 2px solid #000;
}
.cmd svg {
    width: 26px;
    height: 26px;
    padding: 2px;
    border: 1px solid #c8c8a0;
}
.cmd.pressed {
    width: 29px;
    background: #6cc0ac;
    border-right: 1px solid #000;
}
.cmd.pressed svg {
    width: 25px;
    height: 25px;
    padding: 1px;
    background: #ffffcc;
    border: 2px solid #e8e0b8;
    border-right-color: #a8a080;
    border-bottom-color: #a8a080;
}
.command label {
    width: 49px;
    padding-left: 4px;
    line-height: 30px;
}
.xy-wrap {
    width: 175px;
    position: relative;
    border-left: 1px solid #000;
    border-right: 2px solid #000;
    padding: 2px;
}
.xy-wrap input {
    display: block;
    width: 100%;
    height: 28px;
    padding: 0 6px;
    background: #ffffcc;
    border: 2px solid #999978;
    border-right-color: #c8c8a0;
    border-bottom-color: #c8c8a0;
}
.ibeam {
    position: absolute;
    left: 5px;
    top: 4px;
    width: 5px;
    height: 15px;
}
.prompt {
    flex: 1;
    padding-left: 4px;
    line-height: 30px;
}
.units {
    flex: none;
    width: 71px;
    display: flex;
    align-items: center;
    overflow: hidden;
    position: relative;
    padding: 2px 0 2px 6px;
    background: #55ceb0;
    border-left: 2px solid #000;
}
.units select {
    appearance: none;
    flex: none;
    width: 80px;
    height: 27px;
    padding-left: 4px;
    background: #55ceb0;
    border: 2px solid #b0f0e0;
    border-bottom-color: #2d8070;
}
.option-mark {
    position: absolute;
    right: 2px;
    top: 12px;
    width: 12px;
    height: 7px;
    background: #55ceb0;
    border: 2px solid #b0f0e0;
    border-right-color: #2d6b5c;
    border-bottom-color: #2d6b5c;
}
.message {
    flex: none;
    height: 30px;
    padding: 3px 0 0 8px;
    text-align: center;
    line-height: 20px;
    background: #b4ffff;
    border-top: 2px solid #6c9c98;
    outline: 1px solid #000;
    outline-offset: -2px;
    box-shadow: inset 0 -4px #d8ffff, inset 0 -6px #5c9898, inset 0 4px #d8ffff;
}

/* taskbar */
.taskbar {
    flex: none;
    height: 21px;
    display: flex;
    padding: 4px 0 0 2px;
    gap: 1px;
    overflow: hidden;
    background: #d4d0c8;
    border-top: 2px solid #c0e0dc;
    font: 11px "DejaVu Sans Condensed", "Noto Sans CJK SC", sans-serif;
}
.task {
    flex: none;
    width: 128px;
    height: 22px;
    display: flex;
    align-items: center;
    gap: 3px;
    padding-left: 3px;
    white-space: nowrap;
    overflow: hidden;
    background: #d4d0c8;
    border: 1px solid #fff;
    border-right: 2px solid #404040;
}
.task svg {
    flex: none;
    width: 16px;
    height: 16px;
}
.start {
    width: 47px;
    padding-left: 1px;
    gap: 0;
    font-size: 12px;
}
.calc {
    margin-left: 8px;
    gap: 6px;
    font-size: 12px;
}
.quick {
    flex: none;
    width: 16px;
    height: 16px;
    margin: 3px 10px 0;
}
.editor-tasks {
    flex: none;
    display: flex;
    gap: 1px;
    margin-left: 2px;
}
.sep {
    width: 2px;
    height: 20px;
    margin-left: 56px;
    border-left: 1px solid #888;
    border-right: 1px solid #fff;
}
.tray-area {
    flex: 1;
    display: flex;
}
.tray-area .sep {
    margin-left: 9px;
}
.keyboard {
    width: 16px;
    height: 16px;
    margin: 3px 4px 0 8px;
}
.tray {
    flex: 1;
    display: flex;
    gap: 8px;
    height: 22px;
    padding: 3px 0 0;
    border-top: 1px solid #888;
    border-left: 1px solid #888;
}
.tray svg {
    width: 16px;
    height: 16px;
}
.tray-time {
    margin-left: 14px;
    line-height: 18px;
}
.badge {
    position: absolute;
    right: 335px;
    top: -27px;
    width: 46px;
    height: 46px;
    border: 2px solid #d8e8e0;
    border-radius: 50%;
    background: #40b860;
    box-shadow: 0 2px 3px #666;
    color: #fff;
    font: 12px/64px "DejaVu Sans", sans-serif;
    text-align: center;
}
```
